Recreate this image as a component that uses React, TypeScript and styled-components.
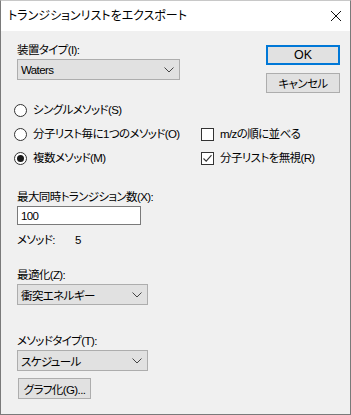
import styled, { createGlobalStyle } from 'styled-components';

const GlobalStyle = createGlobalStyle`
    html, body {
        margin: 0;
        padding: 0;
        background: #ffffff;
    }
    body {
        font-family: "Liberation Sans", "Noto Sans CJK JP", sans-serif;
        font-size: 11.5px;
        letter-spacing: -0.6px;
        color: #000000;
    }
`;

function Chevron() {
    return (
        <svg width="10" height="6" viewBox="0 0 10 6">
            <path d="M0.5 0.5 L5 5 L9.5 0.5" fill="none" stroke="#444" strokeWidth="1" />
        </svg>
    );
}

interface IOptionProps {
    checked?: boolean;
    label: string;
}

function Radio({ checked, label }: IOptionProps) {
    return (
        <OptionRow>
            <RadioCircle>{checked && <RadioDot />}</RadioCircle>
            <OptionText>{label}</OptionText>
        </OptionRow>
    );
}

function Check({ checked, label }: IOptionProps) {
    return (
        <OptionRow>
            <CheckBox>
                {checked && (
                    <svg width="11" height="11" viewBox="0 0 11 11">
                        <path d="M1.5 5.5 L4.2 8.2 L9.5 2.2" fill="none" stroke="#333" strokeWidth="1.1" />
                    </svg>
                )}
            </CheckBox>
            <OptionText>{label}</OptionText>
        </OptionRow>
    );
}

function App() {
    return (
        <>
            <GlobalStyle />
            <Window>
                <TitleBar>
                    <Title>トランジションリストをエクスポート</Title>
                    <CloseIcon viewBox="0 0 10 10">
                        <path d="M0 0 L10 10 M10 0 L0 10" stroke="#111" strokeWidth="1" />
                    </CloseIcon>
                </TitleBar>
                <Body>
                    <TopRow>
                        <Field>
                            <Label>装置タイプ(I):</Label>
                            <Select $width={163}>
                                <span>Waters</span>
                                <Chevron />
                            </Select>
                        </Field>
                        <ButtonColumn>
                            <Button $default>OK</Button>
                            <Button>キャンセル</Button>
                        </ButtonColumn>
                    </TopRow>

                    <OptionsGrid>
                        <Radio label="シングルメソッド(S)" />
                        <span />
                        <Radio label="分子リスト毎に1つのメソッド(O)" />
                        <Check label="m/zの順に並べる" />
                        <Radio checked label="複数メソッド(M)" />
                        <Check checked label="分子リストを無視(R)" />
                    </OptionsGrid>

                    <Field $top={20}>
                        <Label>最大同時トランジション数(X):</Label>
                        <TextInput>100</TextInput>
                    </Field>
                    <Info>
                        <span>メソッド:</span>
                        <InfoValue>5</InfoValue>
                    </Info>

                    <Field $top={20}>
                        <Label>最適化(Z):</Label>
                        <Select $width={131}>
                            <span>衝突エネルギー</span>
                            <Chevron />
                        </Select>
                    </Field>

                    <Field $top={29}>
                        <Label>メソッドタイプ(T):</Label>
                        <Select $width={131}>
                            <span>スケジュール</span>
                            <Chevron />
                        </Select>
                    </Field>
                    <SmallButton>グラフ化(G)...</SmallButton>
                </Body>
            </Window>
        </>
    );
}

const Window = styled.div`
    width: 351px;
    height: 415px;
    box-sizing: border-box;
    border: 1px solid #7a7a7a;
    border-top-color: #c8c8c8;
    display: flex;
    flex-direction: column;
    background: #f0f0f0;
`;

const TitleBar = styled.div`
    height: 30px;
    flex: none;
    background: #ffffff;
    display: flex;
    align-items: center;
    justify-content: space-between;
    padding: 0 9px 0 7px;
`;

const Title = styled.div`
    font-size: 12px;
    letter-spacing: 0;
    line-height: 14px;
    font-feature-settings: "palt";
`;

const CloseIcon = styled.svg`
    width: 10px;
    height: 10px;
`;

const Body = styled.div`
    flex: 1;
    display: flex;
    flex-direction: column;
    padding: 0 10px 0 16px;
`;

const TopRow = styled.div`
    display: flex;
    justify-content: space-between;
    padding-top: 12px;
`;

const Field = styled.div<{ $top?: number }>`
    display: flex;
    flex-direction: column;
    align-items: flex-start;
    margin-top: ${p => p.$top ?? 0}px;
`;

const Label = styled.div`
    line-height: 15px;
    height: 15px;
    margin-bottom: 1px;
    font-feature-settings: "palt";
`;

const Select = styled.div<{ $width: number }>`
    width: ${p => p.$width}px;
    height: 21px;
    box-sizing: border-box;
    border: 1px solid #adadad;
    background: #e1e1e1;
    display: flex;
    align-items: center;
    justify-content: space-between;
    padding: 0 4px 0 3px;
    font-feature-settings: "palt";
    svg {
        margin-right: 1px;
    }
`;

const ButtonColumn = styled.div`
    display: flex;
    flex-direction: column;
    gap: 8px;
    padding-top: 2px;
`;

const Button = styled.div<{ $default?: boolean }>`
    width: 74px;
    height: 20px;
    box-sizing: border-box;
    background: #e1e1e1;
    border: ${p => p.$default ? '2px solid #0078d7' : '1px solid #adadad'};
    display: flex;
    align-items: center;
    justify-content: center;
    font-size: ${p => p.$default ? '12.5px' : '11.5px'};
    letter-spacing: ${p => p.$default ? '0' : '-0.6px'};
    font-feature-settings: "palt";
`;

const OptionsGrid = styled.div`
    display: grid;
    grid-template-columns: 187px minmax(0, 1fr);
    grid-auto-rows: 24px;
    margin: 5px 0 0 -3px;
`;

const OptionRow = styled.div`
    display: flex;
    align-items: center;
    gap: 6px;
    min-width: 0;
    white-space: nowrap;
`;

const RadioCircle = styled.span`
    width: 13px;
    height: 13px;
    box-sizing: border-box;
    border-radius: 50%;
    border: 1px solid #333333;
    background: #ffffff;
    display: flex;
    align-items: center;
    justify-content: center;
    flex: none;
`;

const RadioDot = styled.span`
    width: 7px;
    height: 7px;
    border-radius: 50%;
    background: #1a1a1a;
`;

const CheckBox = styled.span`
    width: 13px;
    height: 13px;
    box-sizing: border-box;
    border: 1px solid #333333;
    background: #ffffff;
    display: flex;
    align-items: center;
    justify-content: center;
    flex: none;
`;

const OptionText = styled.span`
    line-height: 15px;
    font-feature-settings: "palt";
`;

const TextInput = styled.div`
    width: 124px;
    height: 19px;
    box-sizing: border-box;
    border: 1px solid #7a7a7a;
    background: #ffffff;
    padding: 0 3px;
    display: flex;
    align-items: center;
`;

const Info = styled.div`
    display: flex;
    margin-top: 8px;
    line-height: 15px;
    font-feature-settings: "palt";
`;

const InfoValue = styled.span`
    margin-left: 20px;
`;

const SmallButton = styled.div`
    width: 73px;
    height: 21px;
    box-sizing: border-box;
    margin: 7px 0 0 1px;
    border: 1px solid #adadad;
    background: #e1e1e1;
    display: flex;
    align-items: center;
    justify-content: center;
    font-feature-settings: "palt";
`;

export default App;
